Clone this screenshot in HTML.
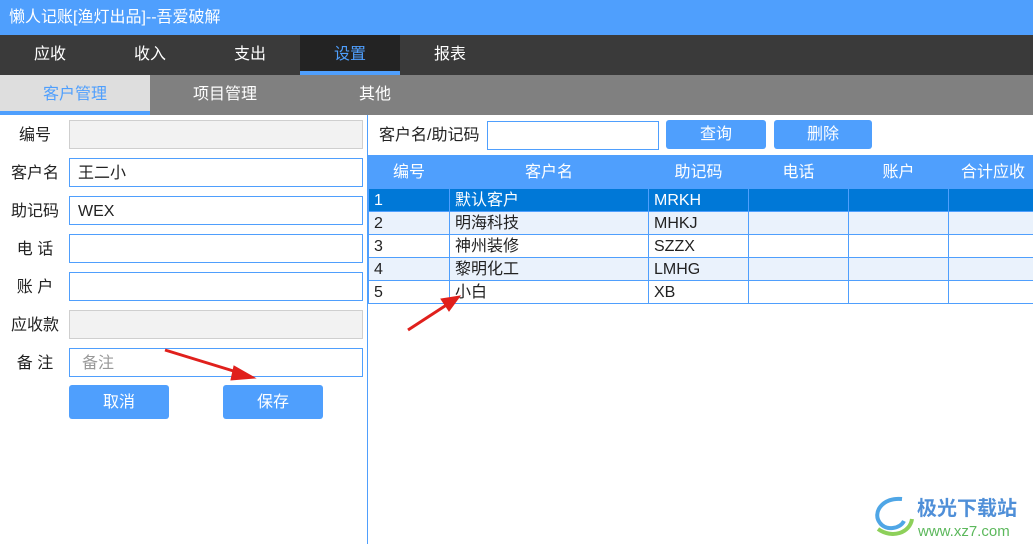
<!DOCTYPE html><html><head><meta charset="utf-8"><style>
*{margin:0;padding:0;box-sizing:border-box}
body{width:1033px;height:544px;overflow:hidden;background:#fff;font-family:"Liberation Sans","Noto Sans CJK SC",sans-serif;position:relative;font-size:15px;color:#222}
.a{position:absolute}
.title{left:0;top:0;width:1033px;height:35px;background:#4f9ffd;color:#fff;font-size:16px;line-height:35px;padding-left:9px}
.nav{left:0;top:35px;width:1033px;height:40px;background:#3a3a3a}
.nav div{position:absolute;top:0;width:100px;height:40px;line-height:40px;text-align:center;color:#fff;font-size:16px}
.sub{left:0;top:75px;width:1033px;height:40px;background:#808080}
.sub div{position:absolute;top:0;width:150px;height:40px;line-height:40px;text-align:center;color:#fff;font-size:16px}
.lbl{width:60px;text-align:center;font-size:16px;line-height:32px;height:29px}
.inp{left:69px;width:294px;height:29px;border:1px solid #4f9ffd;background:#fff;line-height:29px;padding-left:8px;font-size:16px}
.dis{background:#f2f2f2;border-color:#cfcfcf}
.btn{background:#4f9ffd;color:#fff;text-align:center;border-radius:3px;font-size:16px}
table{position:absolute;left:368px;top:155px;border-collapse:collapse;width:670px;font-size:16px;table-layout:fixed}
td,th{height:23px;line-height:21px;border:1px solid #4f9ffd;padding:1px 0 0 5px;text-align:left;font-weight:normal;white-space:nowrap;overflow:hidden}
th{background:#4f9ffd;color:#fff;height:33px;line-height:30px;text-align:center;padding:2px 0 0 0;border-color:#4f9ffd}
tr.s td{background:#0078d7;color:#fff;border-color:#4f9ffd}
tr.e td{background:#eaf2fc}
</style></head><body>
<div class="a title">懒人记账[渔灯出品]--吾爱破解</div>
<div class="a nav"><div style="left:0">应收</div><div style="left:100px">收入</div><div style="left:200px">支出</div><div style="left:300px;background:#232323;color:#4f9ffd;border-bottom:4px solid #4f9ffd">设置</div><div style="left:400px">报表</div></div>
<div class="a sub"><div style="left:0;background:#dedede;color:#4f9ffd;border-bottom:4px solid #4f9ffd">客户管理</div><div style="left:150px">项目管理</div><div style="left:300px">其他</div></div>
<div class="a" style="left:367px;top:115px;width:1px;height:429px;background:#4f9ffd"></div>
<div class="a lbl" style="left:5px;top:120px">编号</div><div class="a inp dis" style="top:120px"></div>
<div class="a lbl" style="left:5px;top:158px">客户名</div><div class="a inp" style="top:158px">王二小</div>
<div class="a lbl" style="left:5px;top:196px">助记码</div><div class="a inp" style="top:196px">WEX</div>
<div class="a lbl" style="left:5px;top:234px">电 话</div><div class="a inp" style="top:234px"></div>
<div class="a lbl" style="left:5px;top:272px">账 户</div><div class="a inp" style="top:272px"></div>
<div class="a lbl" style="left:5px;top:310px">应收款</div><div class="a inp dis" style="top:310px"></div>
<div class="a lbl" style="left:5px;top:348px">备 注</div><div class="a inp" style="top:348px;color:#999;padding-left:12px">备注</div>
<div class="a btn" style="left:69px;top:385px;width:100px;height:34px;line-height:36px">取消</div>
<div class="a btn" style="left:223px;top:385px;width:100px;height:34px;line-height:36px">保存</div>
<div class="a" style="left:379px;top:121px;font-size:16px;line-height:30px">客户名/助记码</div>
<div class="a inp" style="left:487px;top:121px;width:172px"></div>
<div class="a btn" style="left:666px;top:120px;width:100px;height:29px;line-height:30px">查询</div>
<div class="a btn" style="left:774px;top:120px;width:98px;height:29px;line-height:30px">删除</div>
<table>
<colgroup><col style="width:81px"><col style="width:199px"><col style="width:100px"><col style="width:100px"><col style="width:100px"><col></colgroup>
<tr><th>编号</th><th>客户名</th><th>助记码</th><th>电话</th><th>账户</th><th>合计应收</th></tr>
<tr class="s"><td>1</td><td>默认客户</td><td>MRKH</td><td></td><td></td><td></td></tr>
<tr class="e"><td>2</td><td>明海科技</td><td>MHKJ</td><td></td><td></td><td></td></tr>
<tr><td>3</td><td>神州装修</td><td>SZZX</td><td></td><td></td><td></td></tr>
<tr class="e"><td>4</td><td>黎明化工</td><td>LMHG</td><td></td><td></td><td></td></tr>
<tr><td>5</td><td>小白</td><td>XB</td><td></td><td></td><td></td></tr>
</table>
<svg class="a" style="left:0;top:0" width="1033" height="544">
<g stroke="#e0201c" stroke-width="3" fill="#e0201c">
<line x1="165" y1="350" x2="240" y2="373"/><polygon points="255,378 234,366 231,380" stroke-width="1"/>
<line x1="408" y1="330" x2="448" y2="304"/><polygon points="460,296 441,299 449,311" stroke-width="1"/>
</g>
<g transform="translate(872,493)"><path d="M30 6 C10 4 0 20 8 30 C14 38 28 36 32 28" fill="none" stroke="#4fa6e6" stroke-width="4"/><path d="M6 36 C20 46 38 40 40 26" fill="none" stroke="#8dd05a" stroke-width="4"/></g>
<text x="917" y="515" font-size="20" font-weight="bold" fill="#4f8fd8" font-family="Noto Sans CJK SC,sans-serif">极光下载站</text>
<text x="918" y="536" font-size="15" fill="#5cb85c" font-family="Liberation Sans,sans-serif">www.xz7.com</text>
</svg>
</body></html>
